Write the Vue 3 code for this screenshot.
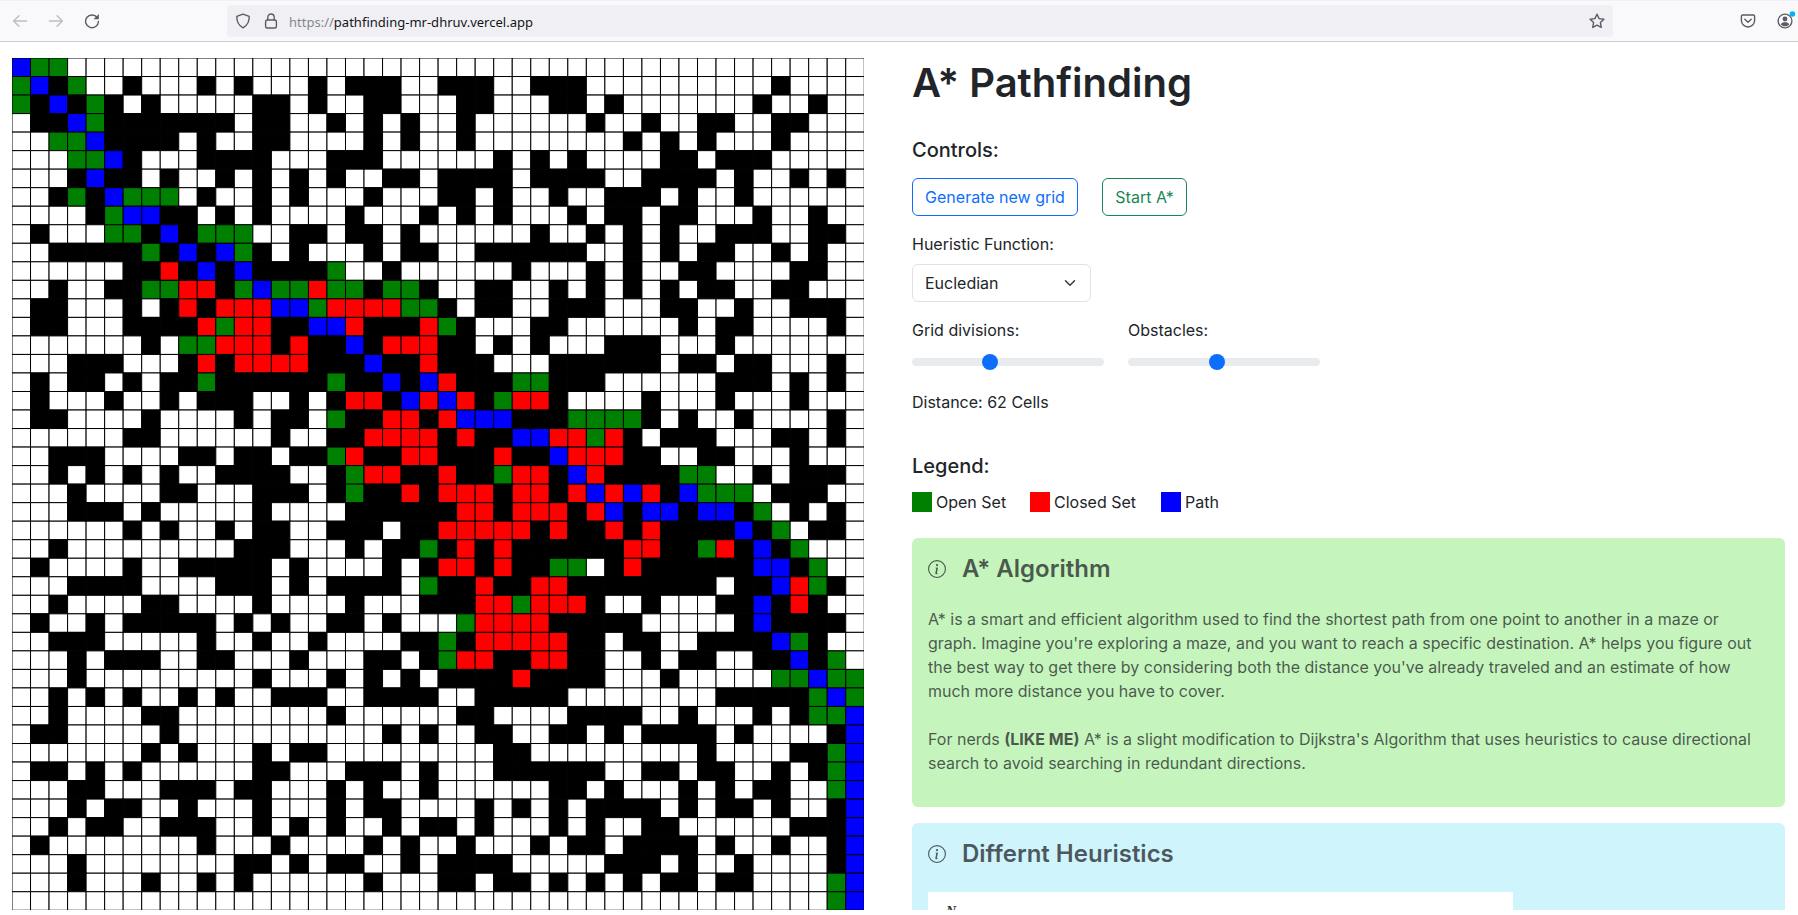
<script setup>
const rows = [
  'bgg.............' + '................' + '..............',
  'gb#g..#...#.#...' + '#.###..###..###.' + '.........#....',
  'g#b#g#.#.....##.' + '#..##...##...##.' + '#.......#..#..',
  '.##bg#######.##.' + '.#.#.#..#......#' + '..#..##..##...',
  '..ggb####.#..##.' + '...#.#..#.......' + '.#.#.#...#....',
  '...ggb#...####..' + '.###......#.#.#.' + '...##.###.....',
  '...#b##.#..#.#.#' + '.#..##.####.####' + '..####.#..#.#.',
  '..#g#bggg.#..#.#' + '...#...##.#..#..' + '###.#..#......',
  '....#gbb##.#.#..' + '..#...#.#.#...#.' + '##.##...#..#..',
  '.#...gg#b#ggg..#' + '#.##.#......#..#' + '.#.#..###..##.',
  '..#####g#b#bg#.#' + '...#.##..######.' + '.#.#.##..#.#..',
  '......##r#b#b###' + '#g..#......#...#' + '.#..##....##..',
  '..#..##ggrr#gbgg' + 'rgg#gg#..##..#.#' + '.#.#.##..##...',
  '.##...#.#r#rrrbb' + 'grrrrgg#.##..###' + '...##..#..###.',
  '.##...####rgrr##' + 'bbr###rg#...##..' + '....#.##....#.',
  '.......#.ggrrr#r' + '##b#rrr##.#.#...' + '###...#.......',
  '...###...#r#rrrr' + '###b##r###...###' + '###.##.##...#.',
  '.#.##.#.##g#####' + '#g##b#br###gg###' + '......###.#.#.',
  '.#...#..#.###..#' + '.#rr#brbr#grr#..' + '..#...#...#...',
  '.##....#....#.##' + '.g##rr#rbbb###gg' + 'gg#.#..#....#.',
  '......##......#.' + '.##rrrr#r##bbrrg' + 'r#.###...##.#.',
  '..###....##.##.#' + '#gr##rr###r##brr' + 'r##..##...#...',
  '..#.#.#.#..####.' + '.#grr##r##grr#br' + '####gg..#.###.',
  '...#....##...###' + '.#g##r#rrr#rr#rb' + 'rbr#bggg.###..',
  '...###.#.....#..' + '..######rr#rrr#r' + 'b#bb#bb#g.#.#.',
  '......#.#..#.##.' + '.###.##rrrrr#r##' + 'r#r####b#g.##.',
  '..#.........###.' + '..#.##g#r#r#####' + '#rr##gr#b#g...',
  '.#....#..#####.#' + '....#.#rr#r##gg.' + '#r######bb#g..',
  '...####....###.#' + '.####.g##r##rr##' + '######.##brg#.',
  '..#....##....#..' + '..#...###rrgrrr#' + '..#...##b#r#..',
  '.#..#.#####.#.#.' + '.##.#...grrrr###' + '##.....#b####.',
  '..###.....#..#..' + '#....##g#rrrrr##' + '.##..####bg#..',
  '...#.###..##...#' + '...##.#grr##rr##' + '..#.##..##b#g.',
  '...#.........#..' + '.#.#.#.####r####' + '...#.....ggbgg',
  '..#.#.#..#.#..##' + '#..####..#####..' + '......#####gbg',
  '..#....##.......' + '.#......##....##' + '##..#...#.#ggb',
  '.##.....#.......' + '....#.#..##..##.' + '#.####.#....#b',
  '.......#.#...#.#' + '#.........##....' + '.....#....##gb',
  '.##.#.#......##.' + '..###.#...######' + '..##.##..#.#gb',
  '...##...###.##..' + '.#.#..#......##.' + '#...#.#.##..gb',
  '...#.##..#...#..' + '.#.##....#.#.#.#' + '###.#.##.#..#b',
  '..#.##..###..#.#' + '.#..#.##.#...#.#' + '..##......###b',
  '.#........#...#.' + '...#.#..#...#.##' + '.####.#..#..#b',
  '...#........##.#' + '.##..#.####.....' + '###.#..#....#b',
  '...#...#..#.#...' + '...#...##.##.#.#' + '.#.##.##....gb',
  '................' + '................' + '............gb',
]

const kinds = { '.': 'free', '#': 'wall', g: 'open', r: 'closed', b: 'path' }
const size = 18.5275
const cells = rows.flatMap((row, y) =>
  [...row].map((c, x) => ({ id: `${x}-${y}`, x: x * size, y: y * size, kind: kinds[c] }))
)
</script>

<template>
  <div class="window">
    <header class="toolbar">
      <div class="nav">
        <svg class="nav-icon off" viewBox="0 0 16 16"><path d="M14.6 8H1.6M7 2.8 1.6 8 7 13.2" /></svg>
        <svg class="nav-icon off" viewBox="0 0 16 16"><path d="M1.4 8h13M9 2.8 14.4 8 9 13.2" /></svg>
        <svg class="nav-icon" viewBox="0 0 16 16"><path d="M13.2 4.6A6.4 6.4 0 1 0 14.4 8.4" /><path class="solid" d="M14.8 1v5.2H9.6z" /></svg>
      </div>
      <div class="url">
        <svg class="shield" viewBox="0 0 16 16"><path d="M8 1.2 14.2 3.4c.2 5.2-1.6 9-6.2 11.4C3.4 12.4 1.6 8.6 1.8 3.4z" /></svg>
        <svg class="lock" viewBox="0 0 16 16"><rect x="2.6" y="7" width="10.8" height="8" rx="1.5" /><path d="M4.8 7V4.2a3.2 3.2 0 0 1 6.4 0V7" /></svg>
        <span class="address"><span class="scheme">https://</span>pathfinding-mr-dhruv.vercel.app</span>
        <svg class="star" viewBox="0 0 16 16"><path d="m8 1.2 2.1 4.4 4.8.6-3.5 3.4.9 4.8L8 12.1l-4.3 2.3.9-4.8L1.1 6.2l4.8-.6z" /></svg>
      </div>
      <div class="extras">
        <svg class="pocket" viewBox="0 0 16 16"><path d="M2.6 2h10.8c.7 0 1.2.5 1.2 1.2v4.2a6.6 6.6 0 0 1-13.2 0V3.2C1.4 2.5 1.9 2 2.6 2z" /><path d="M4.8 6.2 8 9.2l3.2-3" /></svg>
        <svg class="account" viewBox="0 0 20 20"><circle cx="9" cy="10" r="6.9" /><circle class="solid" cx="9" cy="8" r="2.4" /><path class="solid" d="M4.8 13.4c.6-1.6 2-2.2 4.2-2.2s3.6.6 4.2 2.2c-2.2 2.4-6.2 2.4-8.4 0z" /><circle class="dot" cx="16.4" cy="3" r="2.8" /></svg>
      </div>
    </header>

    <main class="page">
      <svg class="grid" viewBox="0 0 852 852">
        <rect v-for="c in cells" :key="c.id" :class="c.kind" :x="c.x" :y="c.y" :width="size" :height="size" />
      </svg>

      <section class="panel">
        <h1>A* Pathfinding</h1>

        <h2 class="controls-title">Controls:</h2>
        <div class="row buttons">
          <button class="btn primary">Generate new grid</button>
          <button class="btn success">Start A*</button>
        </div>

        <div class="label">Hueristic Function:</div>
        <div class="select">
          <span>Eucledian</span>
          <svg viewBox="0 0 16 16"><path d="m2 5 6 6 6-6" /></svg>
        </div>

        <div class="row sliders">
          <div class="slider">
            <div>Grid divisions:</div>
            <div class="range"><i class="thumb divisions"></i></div>
          </div>
          <div class="slider">
            <div>Obstacles:</div>
            <div class="range"><i class="thumb obstacles"></i></div>
          </div>
        </div>

        <div class="distance">Distance: 62 Cells</div>

        <h2 class="legend-title">Legend:</h2>
        <div class="row legend">
          <div class="key key-open"><i class="swatch open"></i>Open Set</div>
          <div class="key key-closed"><i class="swatch closed"></i>Closed Set</div>
          <div class="key"><i class="swatch path"></i>Path</div>
        </div>

        <article class="card green">
          <h3>
            <svg class="info" viewBox="0 0 16 16"><path d="M8 15A7 7 0 1 1 8 1a7 7 0 0 1 0 14m0 1A8 8 0 1 0 8 0a8 8 0 0 0 0 16" /><path d="m8.93 6.588-2.29.287-.082.38.45.083c.294.07.352.176.288.469l-.738 3.468c-.194.897.105 1.319.808 1.319.545 0 1.178-.252 1.465-.598l.088-.416c-.2.176-.492.246-.686.246-.275 0-.375-.193-.304-.533zM9 4.5a1 1 0 1 1-2 0 1 1 0 0 1 2 0" /></svg>
            A* Algorithm
          </h3>
          <p>A* is a smart and efficient algorithm used to find the shortest path from one point to another in a maze or graph. Imagine you're exploring a maze, and you want to reach a specific destination. A* helps you figure out the best way to get there by considering both the distance you've already traveled and an estimate of how much more distance you have to cover.</p>
          <p>For nerds <b>(LIKE ME)</b> A* is a slight modification to Dijkstra's Algorithm that uses heuristics to cause directional search to avoid searching in redundant directions.</p>
        </article>

        <article class="card cyan">
          <h3>
            <svg class="info" viewBox="0 0 16 16"><path d="M8 15A7 7 0 1 1 8 1a7 7 0 0 1 0 14m0 1A8 8 0 1 0 8 0a8 8 0 0 0 0 16" /><path d="m8.93 6.588-2.29.287-.082.38.45.083c.294.07.352.176.288.469l-.738 3.468c-.194.897.105 1.319.808 1.319.545 0 1.178-.252 1.465-.598l.088-.416c-.2.176-.492.246-.686.246-.275 0-.375-.193-.304-.533zM9 4.5a1 1 0 1 1-2 0 1 1 0 0 1 2 0" /></svg>
            Differnt Heuristics
          </h3>
          <div class="sheet">N</div>
        </article>
      </section>
    </main>
  </div>
</template>

<style>
body {
  margin: 0;
  overflow: hidden;
}
</style>

<style scoped>
.window {
  box-sizing: border-box;
  width: 1798px;
  height: 915px;
  overflow: hidden;
  background: #fff;
  color: #212529;
  font: 400 16px/24px Inter, sans-serif;
}
.toolbar {
  box-sizing: border-box;
  display: flex;
  align-items: center;
  height: 42px;
  border-top: 1px solid #f0f0f4;
  border-bottom: 1px solid #ccc;
  background: #f9f9fb;
}
.toolbar svg {
  flex: none;
  fill: none;
  stroke: #5b5b66;
  stroke-width: 1.4;
  stroke-linecap: round;
  stroke-linejoin: round;
}
.toolbar .solid {
  fill: #5b5b66;
  stroke: none;
}
.nav {
  display: flex;
  gap: 20px;
  width: 227px;
  padding-left: 12px;
  box-sizing: border-box;
}
.nav-icon {
  width: 16px;
  height: 16px;
}
.toolbar .nav-icon.off {
  stroke: #bcbcc2;
}
.url {
  box-sizing: border-box;
  display: flex;
  align-items: center;
  width: 1386px;
  height: 32px;
  padding: 0 8px;
  border-radius: 4px;
  background: #f0f0f4;
}
.shield,
.lock,
.star,
.pocket {
  width: 16px;
  height: 16px;
}
.lock {
  margin-left: 12px;
}
.address {
  flex: 1;
  margin-left: 10px;
  padding-top: 2px;
  color: #15141a;
  font: 400 13.03px/20px "Noto Sans", "Open Sans", sans-serif;
}
.scheme {
  color: #86868f;
}
.extras {
  display: flex;
  align-items: center;
  margin-left: 127px;
}
.account {
  width: 20px;
  height: 20px;
  margin-left: 20px;
}
.toolbar .dot {
  fill: #00b3f4;
  stroke: none;
}
.page {
  box-sizing: border-box;
  display: flex;
  align-items: flex-start;
  gap: 48px;
  height: 868px;
  padding: 16px 12px 0;
  overflow: hidden;
}
.grid {
  flex: none;
  width: 852px;
  height: 852px;
  overflow: hidden;
}
.grid rect {
  stroke: #000;
  stroke-width: 1;
}
.free {
  fill: #fff;
}
.wall {
  fill: #000;
}
.open {
  fill: #008000;
  background: #008000;
}
.closed {
  fill: #f00;
  background: #f00;
}
.path {
  fill: #00f;
  background: #00f;
}
.panel {
  flex: none;
  width: 873px;
}
h1,
h2,
h3,
p {
  margin: 0;
}
h1 {
  padding-top: 1px;
  font-size: 40px;
  font-weight: 600;
  line-height: 48px;
}
h2 {
  font-size: 20px;
  font-weight: 500;
  line-height: 24px;
}
.row {
  display: flex;
  gap: 24px;
}
.controls-title {
  margin-top: 31px;
}
.buttons {
  margin-top: 16px;
}
.btn {
  box-sizing: border-box;
  height: 38px;
  padding: 6px 12px;
  border: 1px solid;
  border-radius: 6px;
  background: none;
  font: inherit;
}
.primary {
  width: 166px;
  padding-inline: 0;
  color: #0d6efd;
}
.success {
  width: 85px;
  padding-inline: 0;
  color: #198754;
}
.label {
  margin-top: 16px;
}
.select {
  box-sizing: border-box;
  display: flex;
  align-items: center;
  justify-content: space-between;
  width: 179px;
  height: 38px;
  margin-top: 8px;
  padding: 0 14px 0 12px;
  border: 1px solid #dee2e6;
  border-radius: 6px;
}
.select svg {
  width: 12px;
  height: 12px;
  fill: none;
  stroke: #343a40;
  stroke-width: 2;
  stroke-linecap: round;
  stroke-linejoin: round;
}
.sliders {
  margin-top: 16px;
}
.slider {
  width: 192px;
}
.range {
  display: flex;
  align-items: center;
  height: 8px;
  margin: 16px 0 8px;
  border-radius: 8px;
  background: #e9ecef;
}
.thumb {
  flex: none;
  width: 16px;
  height: 16px;
  border-radius: 50%;
  background: #0d6efd;
}
.divisions {
  margin-left: 70px;
}
.obstacles {
  margin-left: 81px;
}
.distance {
  margin-top: 16px;
}
.legend-title {
  margin-top: 40px;
}
.legend {
  margin-top: 12px;
}
.key {
  display: flex;
  align-items: center;
  gap: 4px;
}
.key-open {
  width: 94px;
}
.key-closed {
  width: 107px;
}
.key {
  white-space: nowrap;
}
.swatch {
  flex: none;
  width: 20px;
  height: 20px;
}
.card {
  box-sizing: border-box;
  padding: 16px;
  border-radius: 6px;
  color: rgba(33, 37, 41, 0.75);
}
.green {
  height: 269px;
  margin-top: 24px;
  background: #c5f4bc;
}
.cyan {
  height: 300px;
  margin-top: 16px;
  background: #cff4fc;
}
.card h3 {
  display: flex;
  align-items: center;
  gap: 16px;
  margin-bottom: 24px;
  font-size: 24px;
  font-weight: 600;
  line-height: 29px;
}
.info {
  width: 18px;
  height: 18px;
  fill: currentColor;
}
.card p {
  margin-bottom: 24px;
}
.sheet {
  box-sizing: border-box;
  width: 585px;
  height: 200px;
  padding: 10px 18px;
  background: #fff;
  color: #333;
  font: italic 700 14px/20px "Liberation Serif", serif;
}
</style>
